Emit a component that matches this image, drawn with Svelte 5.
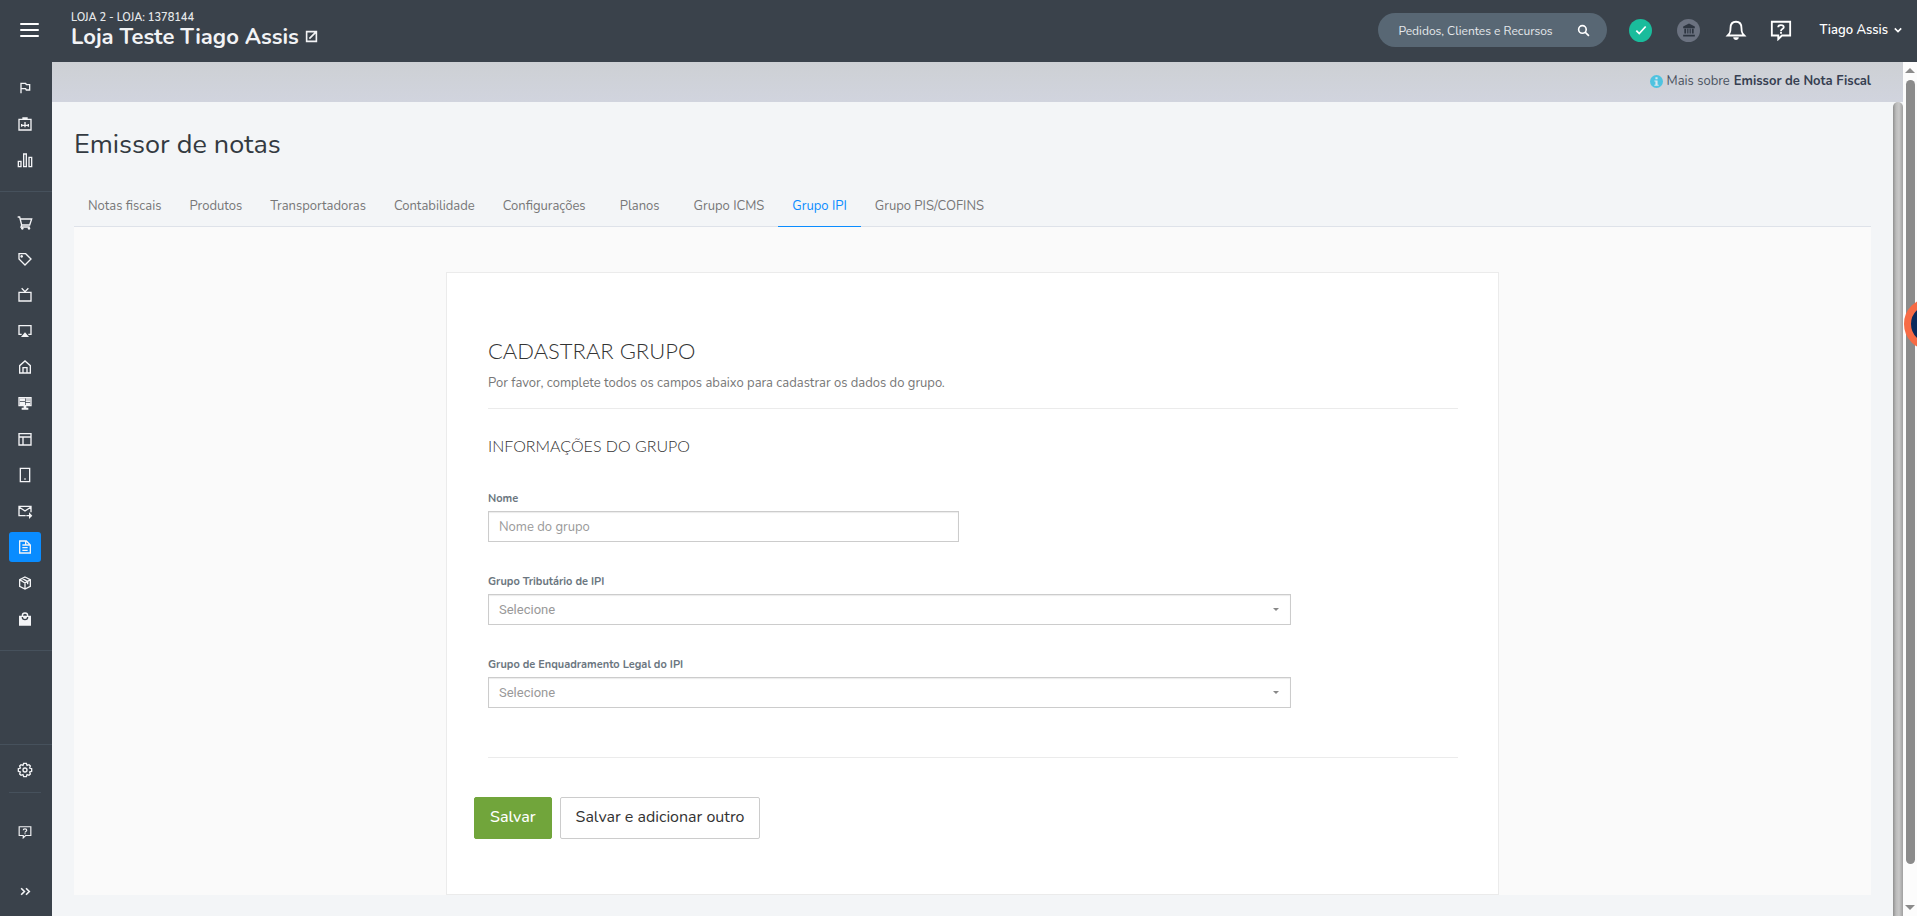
<script lang="ts">
	type Icon = { label: string; stroke?: string; fill?: string };

	// ─── Sidebar ─────────────────────────────────────────────────────────────────
	const shortcuts: Icon[] = [
		{ label: 'Primeiros passos', stroke: 'M6 20V5h7l1 2h5v8h-5l-1-2H6' },
		{
			label: 'Painel',
			stroke: 'M3 5h18v16H3zM9 5V3h6v2M7 16v-4M12 17V9M17 16v-4M6 14h12'
		},
		{ label: 'Relatórios', stroke: 'M2 14h4v8H2zM10 3h4v19h-4zM18 8h4v14h-4z' }
	];

	const modules: Icon[] = [
		{
			label: 'Pedidos',
			stroke: 'M1 3h3l3 12h12l3-9H5M7 15l-1 3h13',
			fill: 'M8 18a2 2 0 1 0 .01 0zM18 18a2 2 0 1 0 .01 0z'
		},
		{
			label: 'Ofertas',
			stroke: 'M3 4v8l9 9 9-9-8-8z',
			fill: 'M7 6a2 2 0 1 0 .01 0z'
		},
		{ label: 'Canais', stroke: 'M3 8h18v13H3zM7 2l5 5 5-5' },
		{ label: 'Transmissão', stroke: 'M7 17H3V4h18v13h-4', fill: 'M12 14l6 7H6z' },
		{ label: 'Loja', stroke: 'M4 21V10l8-7 8 7v11zM9 21v-8h6v8' },
		{
			label: 'Aparência',
			stroke: 'M3 4h18v12H3z',
			fill: 'M4 5h8v4H4zM13 5h7v2h-7zM13 8h7v3h-7zM4 10h8v5H4zM13 12h7v3h-7zM10 16h4v3h3v3H7v-3h3z'
		},
		{ label: 'Páginas', stroke: 'M3 4h18v17H3zM3 9h18M9 9v12' },
		{ label: 'Aplicativo', stroke: 'M5 2h14v20H5z', fill: 'M11 17h2v2h-2z' },
		{
			label: 'Mensagens',
			stroke: 'M13 19H3V5h18v9M3 6l9 6 9-6M14 19h6',
			fill: 'M18 14l5 5-5 5z'
		},
		{ label: 'Emissor de notas', stroke: 'M4 3h10l6 6v12H4zM8 9h4M8 13h8M8 17h8M13 3v6h6' },
		{ label: 'Envios', stroke: 'M12 3l8 4v10l-8 4-8-4V7zM4 7l8 5 8-5M12 12v9M8 5l8 5v4' }
	];

	const current = 'Emissor de notas';

	// ─── Form ────────────────────────────────────────────────────────────────────
	const tabs = [
		'Notas fiscais',
		'Produtos',
		'Transportadoras',
		'Contabilidade',
		'Configurações',
		'Planos',
		'Grupo ICMS',
		'Grupo IPI',
		'Grupo PIS/COFINS'
	];
	let activeTab = $state('Grupo IPI');

	let name = $state('');
	let search = $state('');

	const selects = [
		{ id: 'grupo-tributario', label: 'Grupo Tributário de IPI' },
		{ id: 'grupo-enquadramento', label: 'Grupo de Enquadramento Legal do IPI' }
	];
</script>

{#snippet navItem(icon: Icon)}
	<a class="nav-item" class:active={icon.label === current} href="#modulo" aria-label={icon.label}>
		<svg viewBox="0 0 24 24" width="16" height="16">
			{#if icon.stroke}<path class="line" d={icon.stroke} />{/if}
			{#if icon.fill}<path class="solid" d={icon.fill} />{/if}
		</svg>
	</a>
{/snippet}

{#snippet helpIcon(size: number)}
	<svg viewBox="0 0 24 24" width={size} height={size}>
		<path class="line" d="M2 3h20v15h-9l-4 4v-4H2z" />
		<path class="line" d="M9 9c0-3 6-3 6 0 0 2-3 2-3 4M12 14v2" />
	</svg>
{/snippet}

<div class="app">
	<header class="header">
		<button class="menu" aria-label="Menu"><span></span><span></span><span></span></button>
		<div class="store">
			<span class="store-id">LOJA 2 - LOJA: 1378144</span>
			<a class="store-name" href="#loja">
				Loja Teste Tiago Assis
				<svg viewBox="0 0 24 24" width="13" height="13">
					<path class="line bold" d="M14 3H3v18h18V3h-7M20 4L8 16" />
				</svg>
			</a>
		</div>

		<form class="search">
			<input type="text" placeholder="Pedidos, Clientes e Recursos" aria-label="Buscar" bind:value={search} />
			<button type="button" aria-label="Pesquisar">
				<svg viewBox="0 0 24 24" width="13" height="13">
					<circle class="line bold" cx="10" cy="10" r="7" />
					<path class="line bold" d="M15 15l7 7" />
				</svg>
			</button>
		</form>

		<button class="round ok" aria-label="Status">
			<svg viewBox="0 0 24 24" width="14" height="14"><path class="line bold" d="M4 13l5 5L20 6" /></svg>
		</button>
		<button class="round bank" aria-label="Conta">
			<svg viewBox="0 0 24 24" width="14" height="14">
				<path
					fill="currentColor"
					d="M12 1L2 6v3h20V6zM4 10h3v8H4zM9 10h2v8H9zM13 10h2v8h-2zM17 10h3v8h-3zM2 20h20v3H2z"
				/>
			</svg>
		</button>
		<button class="tool" aria-label="Notificações">
			<svg viewBox="0 0 24 24" width="22" height="22">
				<path class="line" d="M3 18h18c-2-2-3-3-3-8 0-4-2-7-6-7s-6 3-6 7c0 5-1 6-3 8z" />
				<path class="solid" d="M9 20h6c0 4-6 4-6 0z" />
			</svg>
		</button>
		<button class="tool" aria-label="Ajuda">{@render helpIcon(22)}</button>
		<button class="user">
			Tiago Assis
			<svg viewBox="0 0 10 10" width="8" height="8"><path class="line" d="M1 3l4 4 4-4" /></svg>
		</button>
	</header>

	<div class="body">
		<nav class="sidebar">
			<div class="group first">
				{#each shortcuts as icon}
					{@render navItem(icon)}
				{/each}
			</div>
			<div class="group">
				{#each modules as icon}
					{@render navItem(icon)}
				{/each}
				<a class="nav-item" href="#modulo" aria-label="Aplicativos">
					<svg viewBox="0 0 24 24" width="16" height="16">
						<path
							fill="currentColor"
							fill-rule="evenodd"
							d="M3 7h4a5 5 0 0 1 10 0h4v15H3zM9 7h6a3 3 0 0 0-6 0zM7 9a5 5 0 0 0 10 0h-2a3 3 0 0 1-6 0z"
						/>
					</svg>
				</a>
			</div>
			<div class="group last">
				<a class="nav-item" href="#config" aria-label="Configurações da loja">
					<svg viewBox="0 0 24 24" width="16" height="16">
						<path
							class="line"
							d="M10 2h4l1 3 3-1 2 2-1 3 3 1v4l-3 1 1 3-2 2-3-1-1 3h-4l-1-3-3 1-2-2 1-3-3-1v-4l3-1-1-3 2-2 3 1z"
						/>
						<circle class="line" cx="12" cy="12" r="3" />
					</svg>
				</a>
				<hr />
				<a class="nav-item help" href="#ajuda" aria-label="Ajuda">{@render helpIcon(14)}</a>
				<button class="nav-item expand" aria-label="Expandir menu">
					<svg viewBox="0 0 24 24" width="13" height="13">
						<path class="line bold" d="M4 6l6 6-6 6M13 6l6 6-6 6" />
					</svg>
				</button>
			</div>
		</nav>

		<div class="page">
			<div class="topbar">
				<svg viewBox="0 0 12 12" width="13" height="13">
					<circle cx="6" cy="6" r="6" fill="#4ec3e0" />
					<path d="M5 2h2v2H5zM4 5h3v4h1v1H4V9h1V6H4z" fill="#d7e6ee" />
				</svg>
				<span>Mais sobre</span>
				<a href="#sobre">Emissor de Nota Fiscal</a>
			</div>

			<div class="scroll-area">
				<main class="content">
					<h1>Emissor de notas</h1>

					<div class="tabs" role="tablist">
						{#each tabs as tab}
							<button
								role="tab"
								class="tab"
								class:selected={tab === activeTab}
								aria-selected={tab === activeTab}
								onclick={() => (activeTab = tab)}>{tab}</button
							>
						{/each}
					</div>

					<div class="panel">
						<form class="card">
							<h2>CADASTRAR GRUPO</h2>
							<p>Por favor, complete todos os campos abaixo para cadastrar os dados do grupo.</p>
							<hr />
							<h3>INFORMAÇÕES DO GRUPO</h3>

							<div class="field short">
								<label for="nome">Nome</label>
								<input id="nome" type="text" placeholder="Nome do grupo" bind:value={name} />
							</div>

							{#each selects as field}
								<div class="field">
									<label for={field.id}>{field.label}</label>
									<div class="select-box">
										<select id={field.id}>
											<option>Selecione</option>
										</select>
										<span class="caret"></span>
									</div>
								</div>
							{/each}

							<hr class="end" />

							<div class="actions">
								<button type="button" class="btn primary">Salvar</button>
								<button type="button" class="btn">Salvar e adicionar outro</button>
							</div>
						</form>
					</div>
				</main>
				<div class="inner-bar"></div>
			</div>
		</div>

		<div class="outer-bar">
			<span class="arrow up"></span>
			<span class="thumb"></span>
			<span class="rest"></span>
			<span class="arrow down"></span>
		</div>
	</div>

	<button class="bubble" aria-label="Chat"></button>
</div>

<style>
	:global(body) {
		margin: 0;
		background: #f3f5f7;
	}

	.app {
		display: flex;
		flex-direction: column;
		min-height: 100vh;
		position: relative;
		overflow: hidden;
		font-family: Nunito, Lato, sans-serif;
		font-size: 13px;
		color: #777;
	}

	button,
	input,
	select {
		font: inherit;
		color: inherit;
		box-sizing: border-box;
	}

	button {
		border: 0;
		padding: 0;
		background: none;
		cursor: pointer;
	}

	a {
		color: inherit;
		text-decoration: none;
	}

	svg {
		display: block;
		flex-shrink: 0;
	}

	.line {
		fill: none;
		stroke: currentColor;
		stroke-width: 2;
	}

	.line.bold {
		stroke-width: 3;
	}

	.solid {
		fill: currentColor;
	}

	/* header */
	.header {
		display: flex;
		align-items: center;
		height: 62px;
		padding: 0 15px 2px 20px;
		box-sizing: border-box;
		background: #3a424b;
		color: #fff;
	}

	.menu {
		display: flex;
		flex-direction: column;
		gap: 4px;
		width: 19px;
	}

	.menu span {
		height: 2px;
		border-radius: 1px;
		background: #fff;
	}

	.store {
		display: flex;
		flex-direction: column;
		flex: 1;
		margin-left: 32px;
		padding-bottom: 1px;
	}

	.store-id {
		font-size: 11px;
		line-height: 14px;
		font-weight: 600;
		color: #e6e8ea;
	}

	.store-name {
		display: flex;
		align-items: center;
		gap: 6px;
		font-size: 22px;
		line-height: 24px;
		font-weight: 700;
		color: #f2f3f5;
	}

	.search {
		display: flex;
		align-items: center;
		width: 229px;
		height: 34px;
		margin-right: 22px;
		padding: 0 17px 0 20px;
		box-sizing: border-box;
		border-radius: 17px;
		background: #586774;
	}

	.search input {
		flex: 1;
		min-width: 0;
		padding: 2px 0 0;
		border: 0;
		outline: none;
		background: none;
		font-size: 12px;
	}

	.search input::placeholder {
		color: #e6e9ec;
		opacity: 1;
	}

	.round {
		display: flex;
		align-items: center;
		justify-content: center;
		width: 23px;
		height: 23px;
		margin-right: 25px;
		border-radius: 50%;
	}

	.ok {
		background: #1abc9c;
	}

	.bank {
		background: #6b7280;
		color: #2d3540;
	}

	.tool {
		margin-right: 23px;
	}

	.user {
		display: flex;
		align-items: center;
		gap: 6px;
		margin-left: 4px;
		font-weight: 600;
	}

	.body {
		display: flex;
		flex: 1;
	}

	/* sidebar */
	.sidebar {
		display: flex;
		flex-direction: column;
		width: 52px;
		flex-shrink: 0;
		background: #3a424b;
		color: #f3f4f6;
	}

	.group {
		display: flex;
		flex-direction: column;
		gap: 6px;
		padding: 16px 11px 16px 9px;
		border-bottom: 1px solid #46515c;
	}

	.group.first {
		padding-top: 11px;
	}

	.group.last {
		gap: 0;
		margin-top: auto;
		padding-top: 10px;
		border-top: 1px solid #46515c;
		padding-bottom: 10px;
		border-bottom: 0;
	}

	.group hr {
		width: 100%;
		margin: 7px 0 0;
		border: 0;
		border-top: 1px solid #46515c;
	}

	.nav-item {
		display: flex;
		align-items: center;
		justify-content: center;
		height: 30px;
		border-radius: 3px;
	}

	.nav-item.active {
		background: #0a8cff;
	}

	.help {
		margin-top: 24px;
	}

	.expand {
		margin-top: 29px;
	}

	/* page */
	.page {
		display: flex;
		flex-direction: column;
		flex: 1;
		min-width: 0;
	}

	.topbar {
		display: flex;
		align-items: center;
		justify-content: flex-end;
		gap: 4px;
		height: 40px;
		padding: 0 32px 2px 0;
		box-sizing: border-box;
		background: linear-gradient(#cdd0d4, #d1d4de);
		color: #4a5261;
	}

	.topbar a {
		font-weight: 700;
		color: #363f51;
	}

	.scroll-area {
		display: flex;
		flex: 1;
	}

	.content {
		flex: 1;
		min-width: 0;
		padding: 23px 22px 20px;
		background: #f3f5f7;
	}

	h1 {
		margin: 0;
		font-size: 27px;
		line-height: 40px;
		font-weight: 400;
		color: #333a41;
	}

	.tabs {
		display: flex;
		margin-top: 22px;
		border-bottom: 1px solid #dee2e9;
	}

	.tab {
		min-width: 80px;
		height: 40px;
		margin-bottom: -1px;
		padding: 0 14px 2px;
		border-bottom: 1px solid transparent;
	}

	.tab.selected {
		color: #0a8cff;
		border-bottom-color: #0a8cff;
	}

	.panel {
		display: flex;
		justify-content: center;
		padding-top: 45px;
		background: #fafafa;
	}

	.card {
		width: 1053px;
		max-width: 100%;
		padding: 64px 40px 55px 41px;
		box-sizing: border-box;
		border: 1px solid #ebebeb;
		background: #fff;
	}

	h2,
	h3 {
		margin: 0;
		font-family: Lato, sans-serif;
		font-weight: 300;
		color: #333;
	}

	h2 {
		font-size: 22px;
		line-height: 28px;
	}

	h3 {
		margin-top: 26px;
		font-size: 16px;
		line-height: 22px;
	}

	p {
		margin: 8px 0 0;
		line-height: 20px;
	}

	.card hr {
		margin: 15px 0 0;
		border: 0;
		border-top: 1px solid #ebebeb;
	}

	.field {
		width: 803px;
		max-width: 100%;
		margin-top: 32px;
	}

	.field.short {
		width: 471px;
		margin-top: 34px;
	}

	.field label {
		display: block;
		margin-bottom: 4px;
		font-size: 11px;
		line-height: 16px;
		font-weight: 700;
		color: #6b7680;
	}

	.field input,
	.field select {
		display: block;
		width: 100%;
		height: 31px;
		padding: 0 10px;
		border: 1px solid #ccc;
		border-radius: 0;
		background: #fff;
		box-shadow: inset 0 1px 1px rgba(0, 0, 0, 0.08);
		appearance: none;
		outline: none;
	}

	.field input::placeholder {
		color: #999;
		opacity: 1;
	}

	.field select {
		font-family: Roboto, sans-serif;
		color: #999;
	}

	.select-box {
		position: relative;
	}

	.caret {
		position: absolute;
		top: 14px;
		right: 12px;
		border: 3px solid transparent;
		border-top-color: #888;
		border-bottom: 0;
		pointer-events: none;
	}

	.card .end {
		margin-top: 49px;
	}

	.actions {
		display: flex;
		gap: 8px;
		margin: 39px 0 0 -14px;
	}

	.btn {
		height: 42px;
		padding: 0 15px 3px;
		border: 1px solid #ccc;
		border-radius: 2px;
		background: #fff;
		color: #333;
		font-size: 16px;
	}

	.btn.primary {
		border-color: #71a53b;
		background: #71a53b;
		color: #fff;
		font-weight: 500;
	}

	/* scroll bars */
	.inner-bar {
		width: 10px;
		border-radius: 5px 5px 0 0;
		background: linear-gradient(90deg, #8f8f8f, #bbb 30%, #c8c8c8 60%, #a0a0a0);
	}

	.outer-bar {
		display: flex;
		flex-direction: column;
		align-items: center;
		width: 14px;
		padding: 6px 0;
		box-sizing: border-box;
		background: #fcfcfc;
	}

	.thumb {
		flex: 19;
		width: 9px;
		margin-top: 7px;
		border-radius: 5px;
		background: #8b8b8b;
	}

	.rest {
		flex: 1;
	}

	.arrow {
		border: 5px solid transparent;
	}

	.up {
		border-top: 0;
		border-bottom-color: #8b8b8b;
	}

	.down {
		border-bottom: 0;
		border-top-color: #8b8b8b;
	}

	.bubble {
		position: absolute;
		top: 298px;
		right: -39px;
		width: 52px;
		height: 52px;
		border: 7px solid #f76b45;
		border-radius: 50%;
		background: #0b2a5c;
	}
</style>
